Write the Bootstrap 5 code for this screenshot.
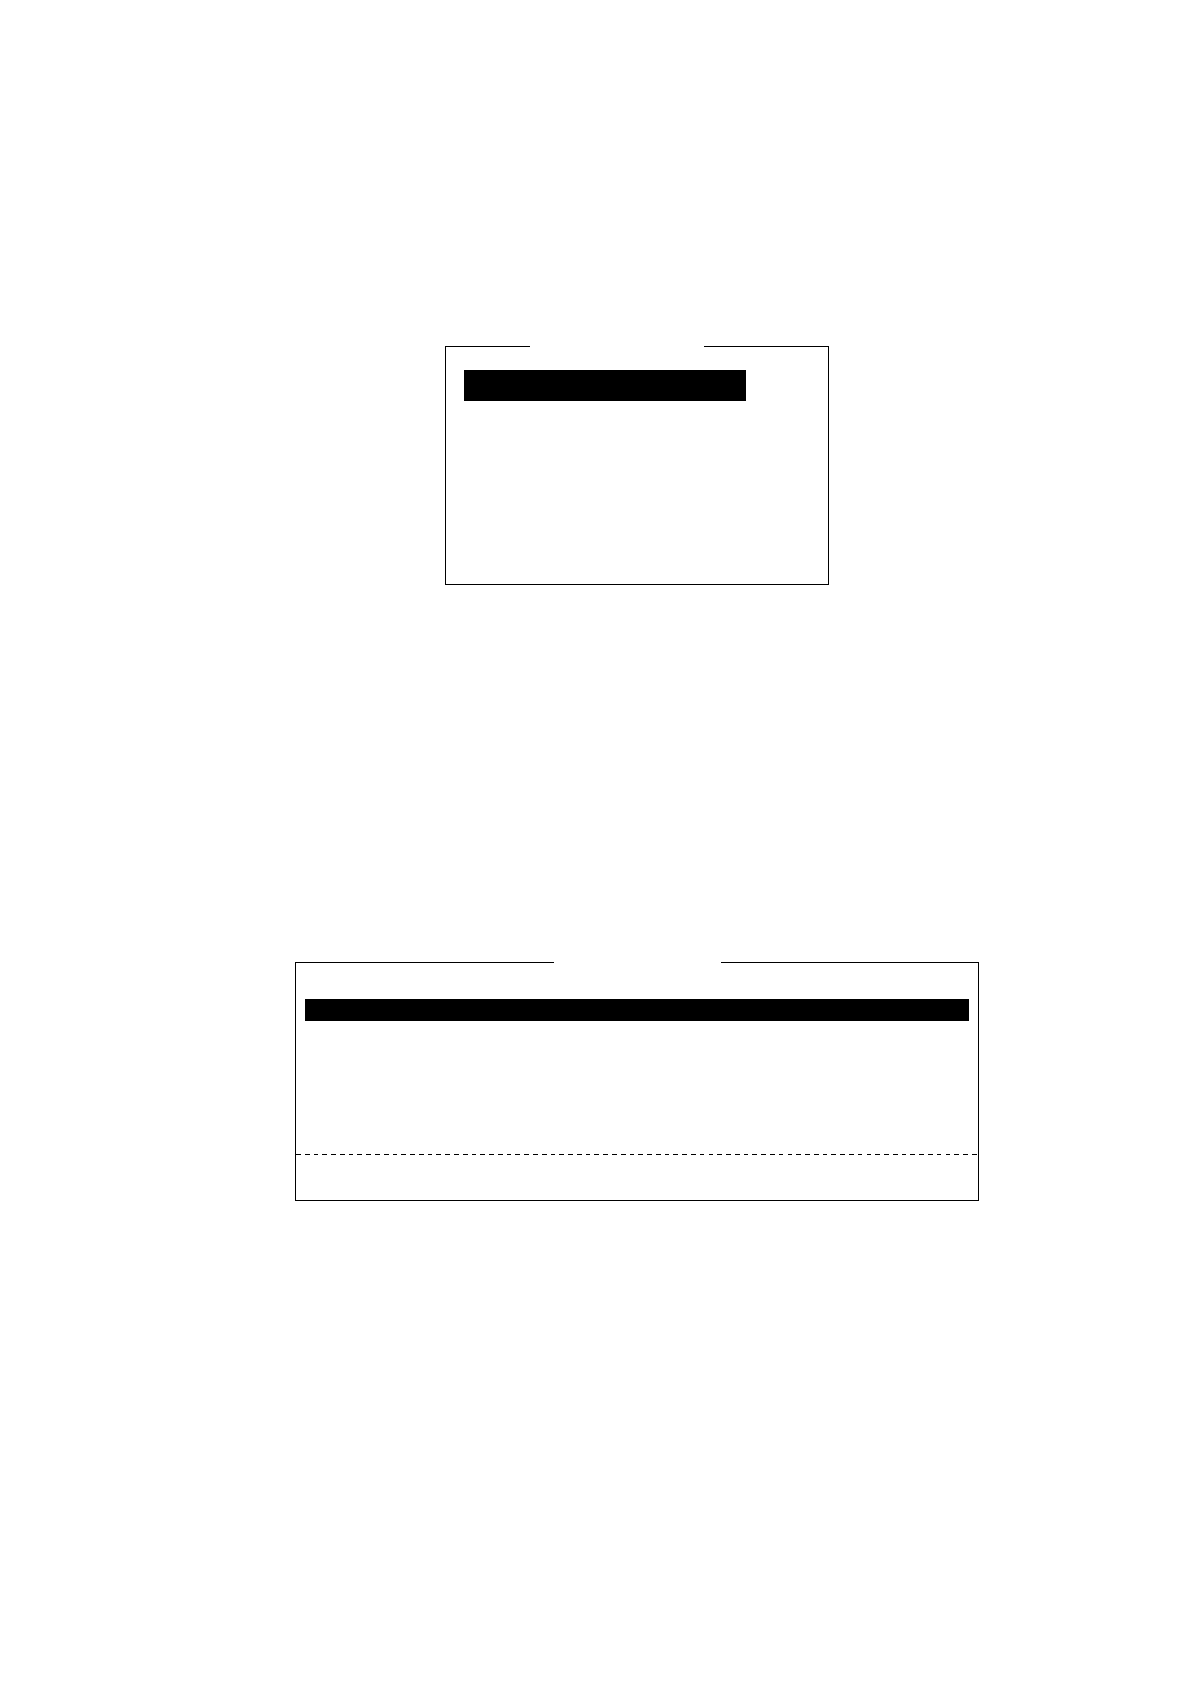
<!DOCTYPE html>
<html lang="en">
<head>
<meta charset="utf-8">
<meta name="viewport" content="width=device-width, initial-scale=1">
<title></title>
<link href="https://cdn.jsdelivr.net/npm/bootstrap@5.3.0/dist/css/bootstrap.min.css" rel="stylesheet">
<style>
  body { background: #fff; font-family: "Liberation Sans", sans-serif; }
  .sheet { padding: 346px 0 483px 84px; gap: 377px; }
  .frame { width: 100%; min-height: 239px; border: 1px solid #000; border-top: 0; }
  .frame-menu { max-width: 384px; }
  .frame-list { max-width: 684px; }
  /* top edge, left open in the middle */
  .edge-line { height: 1px; background: #000; }
  .frame-menu .edge-start { flex: 84 0 0; }
  .frame-menu .edge-open { flex: 174 0 0; }
  .frame-menu .edge-end { flex: 124 0 0; }
  .frame-list .edge-start { flex: 258 0 0; }
  .frame-list .edge-open { flex: 167 0 0; }
  .frame-list .edge-end { flex: 257 0 0; }
  .selection { background: #000; }
  .frame-menu .selection { height: 31px; margin: 23px 82px 0 18px; }
  .frame-list .selection { height: 22px; margin: 36px 9px 0; }
  .divider { height: 1px; margin-bottom: 45px; }
</style>
<script src="https://cdn.jsdelivr.net/npm/bootstrap@5.3.0/dist/js/bootstrap.bundle.min.js"></script>
</head>
<body>
<main class="sheet d-flex flex-column align-items-center">
  <section class="frame frame-menu">
    <div class="d-flex">
      <div class="edge-line edge-start"></div>
      <div class="edge-open"></div>
      <div class="edge-line edge-end"></div>
    </div>
    <div class="selection"></div>
  </section>
  <section class="frame frame-list d-flex flex-column">
    <div class="d-flex">
      <div class="edge-line edge-start"></div>
      <div class="edge-open"></div>
      <div class="edge-line edge-end"></div>
    </div>
    <div class="selection"></div>
    <svg class="divider d-block w-100 mt-auto" viewBox="0 0 682 1" preserveAspectRatio="none" shape-rendering="crispEdges" aria-hidden="true">
      <path d="M0 .5H682" pathLength="3885" stroke="#000" stroke-dasharray="27 23"/>
    </svg>
  </section>
</main>
</body>
</html>
